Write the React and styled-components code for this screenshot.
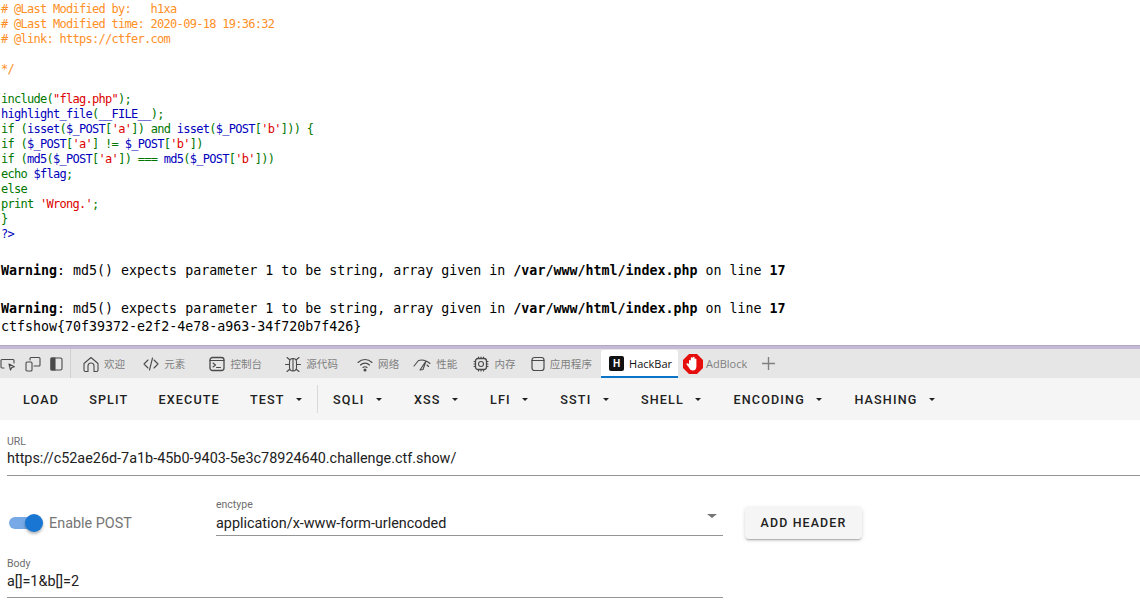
import React from 'react'
import styled, { createGlobalStyle } from 'styled-components'

const GlobalStyle = createGlobalStyle`
  html, body {
    margin: 0;
    padding: 0;
    background: #fff;
    overflow: hidden;
  }
`

const Page = styled.div`
  width: 1140px;
  height: 601px;
  overflow: hidden;
  display: flex;
  flex-direction: column;
  font-family: Roboto, "Noto Sans CJK SC", sans-serif;
`

const Source = styled.div`
  height: 345px;
  flex: none;
  padding-top: 2px;
  box-sizing: border-box;
  overflow: hidden;
  font-family: "DejaVu Sans Mono", monospace;
`
const CodeLine = styled.div`
  height: 15px;
  line-height: 15px;
  font-size: 12px;
  letter-spacing: -0.72px;
  white-space: pre;
  color: #0000bb;
  padding-left: 1px;
`
const C = styled.span`color: #ff8f26;`
const K = styled.span`color: #007700;`
const S = styled.span`color: #dd0000;`

const Output = styled.div`
  margin-top: 19px;
  font-size: 13.3px;
  line-height: 19px;
  white-space: pre;
  color: #000;
  padding-left: 1px;
`
const WarningLine = styled.div`
  margin-bottom: 19px;
`
const Flag = styled.div`
  margin-top: -19px;
  line-height: 18px;
`

const Splitter = styled.div`
  height: 4px;
  flex: none;
  background: #c5b9d6;
  border-top: 1px solid #b3a8c4;
  box-sizing: border-box;
`

const TabBar = styled.div`
  height: 29px;
  flex: none;
  background: #e6e6e6;
  display: flex;
  align-items: center;
  color: #777;
`
const DockIcons = styled.div`
  display: flex;
  align-items: center;
  height: 29px;
  width: 70px;
  gap: 9px;
  flex: none;
  border-right: 1px solid #cfcfcf;
`
const Tab = styled.div`
  display: flex;
  align-items: center;
  height: 29px;
  flex: none;
  font-size: 10.5px;
  gap: 5px;
  margin-left: ${p => p.$left}px;
  letter-spacing: 0.1px;
  color: #808080;
  svg { flex: none; }
`
const ActiveTab = styled.div`
  display: flex;
  align-items: center;
  gap: 5px;
  height: 28px;
  width: 77px;
  margin-left: 9px;
  margin-top: 1px;
  padding-left: 8px;
  box-sizing: border-box;
  flex: none;
  background: #fff;
  color: #111;
  font-size: 11px;
  border-bottom: 2px solid #0a74c9;
  border-radius: 2px 2px 0 0;
  font-family: "Open Sans", sans-serif;
`
const HackBarLogo = styled.span`
  width: 15px;
  height: 15px;
  border-radius: 2px;
  background: #111;
  color: #fff;
  font: 700 10px "Liberation Sans", sans-serif;
  display: flex;
  align-items: center;
  justify-content: center;
`
const AdBlockTab = styled.div`
  display: flex;
  align-items: center;
  gap: 3px;
  margin-left: 5px;
  font-size: 11px;
  color: #808080;
  font-family: "Open Sans", sans-serif;
`
const Plus = styled.div`
  margin-left: 15px;
  display: flex;
`

const Toolbar = styled.div`
  height: 42px;
  flex: none;
  background: #f5f5f5;
  display: flex;
  align-items: center;
  padding-left: 8px;
`
const ToolButton = styled.div`
  display: flex;
  align-items: center;
  flex: none;
  font-size: 12.6px;
  font-weight: 500;
  letter-spacing: 1.15px;
  color: #212121;
  padding: 0 15px;
  height: 36px;
`
const Caret = styled.span`
  width: 0;
  height: 0;
  margin-left: 11.5px;
  margin-right: 2px;
  border-left: 3.5px solid transparent;
  border-right: 3.5px solid transparent;
  border-top: 3.5px solid #212121;
`
const ToolDivider = styled.div`
  width: 1px;
  height: 28px;
  margin-left: -2px;
  background: #d9d9d9;
  flex: none;
`

const Form = styled.div`
  flex: 1;
  background: #fff;
  padding: 16px 0 0 7px;
`
const Field = styled.div`
  border-bottom: 1px solid #949494;
  width: ${p => p.$width};
  height: ${p => p.$height}px;
  margin-top: ${p => p.$top || 0}px;
  box-sizing: border-box;
  position: relative;
`
const FieldLabel = styled.div`
  font-size: 10.5px;
  line-height: 12px;
  color: #6e6e6e;
`
const FieldValue = styled.div`
  font-size: 14.4px;
  line-height: 20px;
  margin-top: ${p => p.$gap}px;
  color: #212121;
  white-space: nowrap;
`
const OptionsRow = styled.div`
  display: flex;
  align-items: flex-start;
  margin-top: 22px;
  height: 60px;
`
const Switch = styled.div`
  width: 34px;
  height: 18px;
  margin: 16px 0 0 2px;
  position: relative;
  flex: none;
`
const SwitchTrack = styled.div`
  position: absolute;
  left: 0;
  top: 3px;
  width: 31px;
  height: 12px;
  border-radius: 6px;
  background: #76a9e6;
`
const SwitchThumb = styled.div`
  position: absolute;
  right: 0;
  top: 0;
  width: 18px;
  height: 18px;
  border-radius: 50%;
  background: #1976d2;
  box-shadow: 0 2px 3px rgba(0, 0, 0, 0.3);
`
const SwitchLabel = styled.div`
  margin: 17px 0 0 6px;
  width: 167px;
  flex: none;
  font-size: 14.4px;
  line-height: 17px;
  color: #757575;
`
const SelectArrow = styled.span`
  position: absolute;
  right: 6px;
  top: 15px;
  width: 0;
  height: 0;
  border-left: 5px solid transparent;
  border-right: 5px solid transparent;
  border-top: 4.5px solid #757575;
`
const AddHeader = styled.div`
  width: 117px;
  height: 32px;
  margin: 9px 0 0 22px;
  padding-bottom: 1px;
  box-sizing: border-box;
  flex: none;
  background: #f5f5f5;
  border-radius: 4px;
  display: flex;
  align-items: center;
  justify-content: center;
  font-size: 12.4px;
  font-weight: 500;
  letter-spacing: 1.15px;
  color: #212121;
  box-shadow: 0 2px 2px -1px rgba(0,0,0,.3), 0 1px 4px rgba(0,0,0,.14);
`

const Icon = ({ w = 16, h = 16, children }) => (
  <svg width={w} height={h} viewBox={`0 0 ${w} ${h}`} fill="none" stroke="#4a4a4a" strokeWidth="1.1" strokeLinecap="round" strokeLinejoin="round">
    {children}
  </svg>
)

const tabs = [
  { label: '欢迎', left: 12, icon: <Icon><path d="M1 7.500 8 1.500l7 6v6.500a1.500 1.500 0 0 1-1.500 1.500H11V10a3 3 0 0 0-6 0v5.500H2.500A1.500 1.500 0 0 1 1 14z" /></Icon> },
  { label: '元素', left: 18, icon: <Icon><path d="M5 4 1 8l4 4M11 4l4 4-4 4M9.500 2 6.500 14" /></Icon> },
  { label: '控制台', left: 24, icon: <Icon><rect x="1" y="1.500" width="14" height="13" rx="2.500" strokeWidth="1.3" /><path d="M1 4.500h14M4 7l2.500 2L4 11M7.500 11.500h4" /></Icon> },
  { label: '源代码', left: 23, icon: <Icon><path d="M4.500 6a3.500 3.500 0 0 1 7 0v5.500a3.500 3.500 0 0 1-7 0zM5 4 2 1.500M11 4l3-2.500M4.500 8.500H.5M11.500 8.500h4M5 13l-3 2.500M11 13l3 2.500M8 3v12" /></Icon> },
  { label: '网络', left: 19, icon: <Icon><path d="M1 6.500c4-4 10-4 14 0M3.500 9c2.500-2.500 6.500-2.500 9 0M6 11.500c1-1 3-1 4 0" /><circle cx="8" cy="14" r="1" fill="#4a4a4a" /></Icon> },
  { label: '性能', left: 14, icon: <Icon w={18}><path d="M1 10 5.500 4.500c3-1 7-1 11.500 3M7 14l6-9-3 8.500zM14 9l1.500 1.500" /></Icon> },
  { label: '内存', left: 16, icon: <Icon><rect x="2.500" y="2.500" width="11" height="11" rx="2.500" strokeWidth="1.3" /><circle cx="8" cy="8" r="2.500" /><path d="M5.500 1v1.500M8 1v1.500M10.500 1v1.500M5.500 13.500V15M8 13.500V15M10.500 13.500V15M1 5.500h1.500M1 8h1.500M1 10.500h1.500M13.500 5.500H15M13.500 8H15M13.500 10.500H15" /></Icon> },
  { label: '应用程序', left: 15, icon: <Icon w={14}><rect x="1" y="1.500" width="12" height="13" rx="2.500" strokeWidth="1.2" /><path d="M1 4.500h12" /></Icon> },
]

const tools = [
  { label: 'LOAD' }, { label: 'SPLIT' }, { label: 'EXECUTE' }, { label: 'TEST', menu: true, divider: true },
  { label: 'SQLI', menu: true }, { label: 'XSS', menu: true }, { label: 'LFI', menu: true }, { label: 'SSTI', menu: true },
  { label: 'SHELL', menu: true }, { label: 'ENCODING', menu: true }, { label: 'HASHING', menu: true },
]

const warning = (
  <>
    <b>Warning</b>: md5() expects parameter 1 to be string, array given in <b>/var/www/html/index.php</b> on line <b>17</b>
  </>
)

export default function App() {
  return (
    <Page>
      <GlobalStyle />
      <Source>
        <CodeLine><C># @Last Modified by:   h1xa</C></CodeLine>
        <CodeLine><C># @Last Modified time: 2020-09-18 19:36:32</C></CodeLine>
        <CodeLine><C># @link: https://ctfer.com</C></CodeLine>
        <CodeLine />
        <CodeLine><C>*/</C></CodeLine>
        <CodeLine />
        <CodeLine><K>include(</K><S>"flag.php"</S><K>);</K></CodeLine>
        <CodeLine>highlight_file<K>(</K>__FILE__<K>);</K></CodeLine>
        <CodeLine><K>if (</K>isset<K>(</K>$_POST<K>[</K><S>'a'</S><K>]) and </K>isset<K>(</K>$_POST<K>[</K><S>'b'</S><K>])) {'{'}</K></CodeLine>
        <CodeLine><K>if (</K>$_POST<K>[</K><S>'a'</S><K>] != </K>$_POST<K>[</K><S>'b'</S><K>])</K></CodeLine>
        <CodeLine><K>if (</K>md5<K>(</K>$_POST<K>[</K><S>'a'</S><K>]) === </K>md5<K>(</K>$_POST<K>[</K><S>'b'</S><K>]))</K></CodeLine>
        <CodeLine><K>echo </K>$flag<K>;</K></CodeLine>
        <CodeLine><K>else</K></CodeLine>
        <CodeLine><K>print </K><S>'Wrong.'</S><K>;</K></CodeLine>
        <CodeLine><K>{'}'}</K></CodeLine>
        <CodeLine>?&gt;</CodeLine>
        <Output>
          <WarningLine>{warning}</WarningLine>
          <WarningLine>{warning}</WarningLine>
          <Flag>ctfshow{'{'}70f39372-e2f2-4e78-a963-34f720b7f426{'}'}</Flag>
        </Output>
      </Source>
      <Splitter />
      <TabBar>
        <DockIcons>
          <Icon><path d="M4 12H2a1 1 0 0 1-1-1V4.500a1 1 0 0 1 1-1h11a1 1 0 0 1 1 1V7M9 8l1.500 6 1.300-2.500 2.600-.8z" /></Icon>
          <Icon><rect x="1" y="6" width="6" height="9" rx="1" /><path d="M5 4V2.500a1 1 0 0 1 1-1h8a1 1 0 0 1 1 1V9a1 1 0 0 1-1 1H9" /></Icon>
          <Icon w={13}><rect x="1" y="2" width="11" height="12" rx="1.500" /><rect x="1" y="2" width="4" height="12" fill="#4a4a4a" /></Icon>
        </DockIcons>
        {tabs.map(tab => <Tab key={tab.label} $left={tab.left}>{tab.icon}{tab.label}</Tab>)}
        <ActiveTab><HackBarLogo>H</HackBarLogo>HackBar</ActiveTab>
        <AdBlockTab>
          <svg width="20" height="20" viewBox="0 0 20 20">
            <path d="M6 0h8l6 6v8l-6 6H6l-6-6V6z" fill="#e60d0d" />
            <path d="M6 10V6.500a1 1 0 0 1 1.800 0V4a1 1 0 0 1 1.900 0v-.6a1 1 0 0 1 1.900 0V5a1 1 0 0 1 1.800 0v7.500c0 2.500-1.500 4-3.500 4-2.200 0-3-1-4-3L3.600 10.500c-.6-1 .6-1.800 1.300-1z" fill="#fff" />
          </svg>
          AdBlock
        </AdBlockTab>
        <Plus>
          <svg width="13" height="13" viewBox="0 0 13 13" stroke="#808080" strokeWidth="1.4"><path d="M6.500 0v13M0 6.500h13" /></svg>
        </Plus>
      </TabBar>
      <Toolbar>
        {tools.map(tool => (
          <React.Fragment key={tool.label}>
            <ToolButton>{tool.label}{tool.menu && <Caret />}</ToolButton>
            {tool.divider && <ToolDivider />}
          </React.Fragment>
        ))}
      </Toolbar>
      <Form>
        <Field $width="1133px" $height={40}>
          <FieldLabel>URL</FieldLabel>
          <FieldValue $gap={1}>https://c52ae26d-7a1b-45b0-9403-5e3c78924640.challenge.ctf.show/</FieldValue>
        </Field>
        <OptionsRow>
          <Switch><SwitchTrack /><SwitchThumb /></Switch>
          <SwitchLabel>Enable POST</SwitchLabel>
          <Field $width="507px" $height={37} $top={1}>
            <FieldLabel>enctype</FieldLabel>
            <FieldValue $gap={3}>application/x-www-form-urlencoded</FieldValue>
            <SelectArrow />
          </Field>
          <AddHeader>ADD HEADER</AddHeader>
        </OptionsRow>
        <Field $width="716px" $height={40}>
          <FieldLabel>Body</FieldLabel>
          <FieldValue $gap={2}>a[]=1&amp;b[]=2</FieldValue>
        </Field>
      </Form>
    </Page>
  )
}
